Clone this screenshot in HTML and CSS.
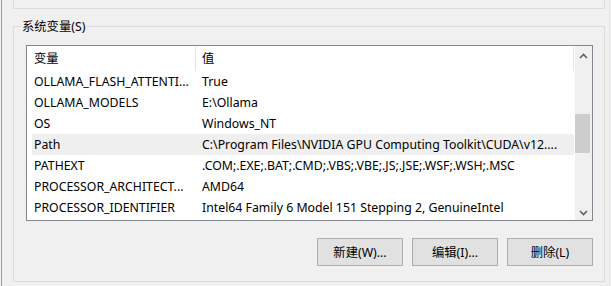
FILE: index.html
```html
<!DOCTYPE html>
<html lang="zh-CN">
<head>
<meta charset="utf-8">
<title>系统变量</title>
<link rel="stylesheet" href="styles.css">
</head>
<body>
<div class="window">
  <div class="top-group"></div>
  <div class="group">
    <div class="group-label">系统变量(S)</div>
    <div class="listbox">
      <div class="list">
        <div class="header">
          <div class="hcell c1">变量</div>
          <div class="hcell c2">值</div>
        </div>
        <div class="row"><div class="cell c1">OLLAMA_FLASH_ATTENTI...</div><div class="cell c2">True</div></div>
        <div class="row"><div class="cell c1">OLLAMA_MODELS</div><div class="cell c2">E:\Ollama</div></div>
        <div class="row"><div class="cell c1">OS</div><div class="cell c2">Windows_NT</div></div>
        <div class="row sel"><div class="cell c1">Path</div><div class="cell c2">C:\Program Files\NVIDIA GPU Computing Toolkit\CUDA\v12....</div></div>
        <div class="row"><div class="cell c1">PATHEXT</div><div class="cell c2">.COM;.EXE;.BAT;.CMD;.VBS;.VBE;.JS;.JSE;.WSF;.WSH;.MSC</div></div>
        <div class="row"><div class="cell c1">PROCESSOR_ARCHITECT...</div><div class="cell c2">AMD64</div></div>
        <div class="row"><div class="cell c1">PROCESSOR_IDENTIFIER</div><div class="cell c2">Intel64 Family 6 Model 151 Stepping 2, GenuineIntel</div></div>
      </div>
      <div class="scrollbar">
        <div class="sb-btn">
          <svg width="9" height="6" viewBox="0 0 9 6"><path d="M1 5 L4.5 1.5 L8 5" fill="none" stroke="#606060" stroke-width="1.6"/></svg>
        </div>
        <div class="sb-track"><div class="sb-thumb"></div></div>
        <div class="sb-btn">
          <svg width="9" height="6" viewBox="0 0 9 6"><path d="M1 1 L4.5 4.5 L8 1" fill="none" stroke="#606060" stroke-width="1.6"/></svg>
        </div>
      </div>
    </div>
    <div class="buttons">
      <button class="btn">新建(W)...</button>
      <button class="btn">编辑(I)...</button>
      <button class="btn">删除(L)</button>
    </div>
  </div>
</div>
</body>
</html>
```
FILE: styles.css
```css
* { box-sizing: border-box; }
html, body { margin: 0; padding: 0; }
body {
  background: #f0f0f0;
  font-family: "Noto Sans", "Noto Sans CJK SC", sans-serif;
  font-size: 12.3px;
  color: #000;
  overflow: hidden;
}
.window {
  margin-left: 1px;
  width: 609px;
  height: 286px;
  border-left: 1px solid #a0a0a0;
  border-right: 1px solid #e3e3e3;
  padding: 0 4px 0 11px;
}
.top-group {
  height: 9px;
  border: 1px solid #dcdcdc;
  border-top: 0;
  margin-bottom: 17px;
}
.group {
  border: 1px solid #dcdcdc;
  padding: 0 11px 15px 12px;
}
.group-label {
  width: fit-content;
  margin: -9px 0 0 -6px;
  padding: 0 2px;
  background: #f0f0f0;
  line-height: 17px;
  height: 17px;
}
.listbox {
  margin-top: 10px;
  height: 176px;
  border: 1px solid #828790;
  background: #fff;
  display: flex;
}
.list {
  flex: 1;
  overflow: hidden;
}
.header {
  display: flex;
  height: 25px;
}
.hcell {
  line-height: 25px;
  border-right: 1px solid #e5e5e5;
  white-space: nowrap;
}
.c1 { width: 169px; padding-left: 7px; flex: none; }
.c2 { width: 378px; padding-left: 6px; flex: none; }
.row {
  display: flex;
  height: 21px;
  line-height: 21px;
  margin-left: 5px;
  width: 542px;
}
.row .c1 { width: 164px; padding-left: 2px; }
.cell {
  white-space: nowrap;
  overflow: hidden;
}
.row.sel { background: #efefef; }
.scrollbar {
  width: 17px;
  flex: none;
  background: #f0f0f0;
  display: flex;
  flex-direction: column;
}
.sb-btn {
  height: 17px;
  display: flex;
  align-items: center;
  justify-content: center;
  padding-top: 2px;
}
.sb-track { flex: 1; }
.sb-thumb {
  margin-top: 51px;
  width: 15px;
  height: 39px;
  background: #cdcdcd;
}
.buttons {
  margin-top: 17px;
  display: flex;
  justify-content: flex-end;
  gap: 9px;
}
.btn {
  width: 86px;
  height: 28px;
  border: 1px solid #adadad;
  background: #e1e1e1;
  font-family: "Noto Sans", "Noto Sans CJK SC", sans-serif;
  font-size: 12.3px;
  color: #000;
  padding: 0;
}
```
